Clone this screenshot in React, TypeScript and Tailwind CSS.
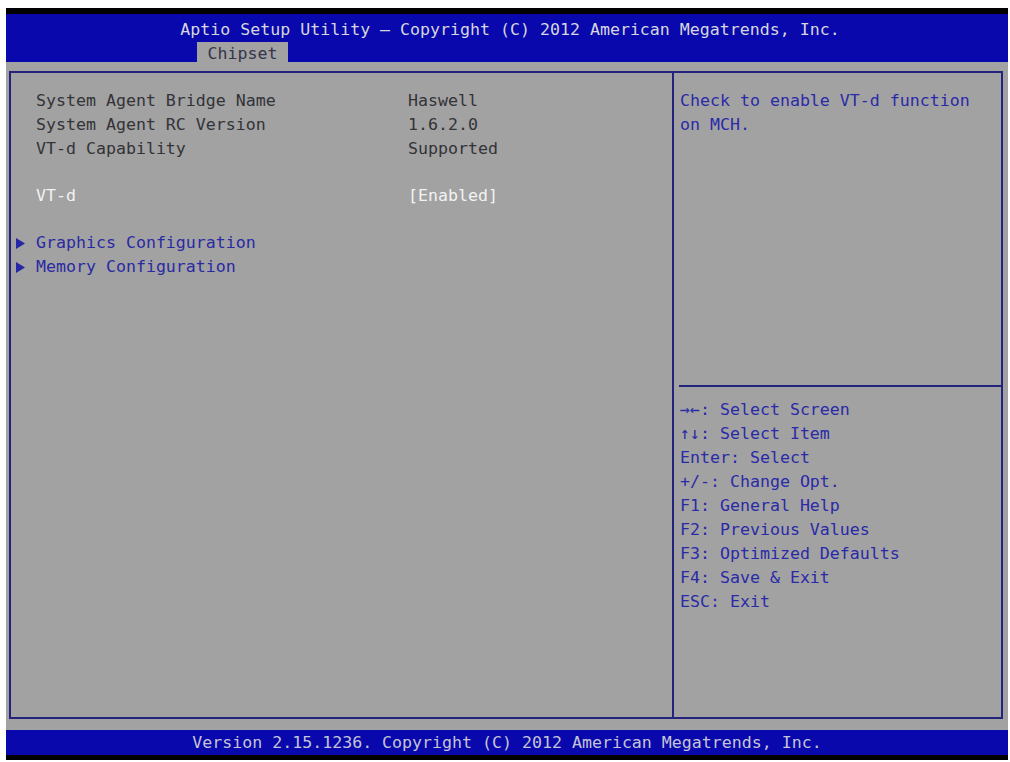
const mono = "font-['DejaVu_Sans_Mono',monospace] text-[16.6px] leading-[24px] whitespace-pre";

const info = [
  ["System Agent Bridge Name", "Haswell"],
  ["System Agent RC Version", "1.6.2.0"],
  ["VT-d Capability", "Supported"],
];

const help = [
  "→←: Select Screen",
  "↑↓: Select Item",
  "Enter: Select",
  "+/-: Change Opt.",
  "F1: General Help",
  "F2: Previous Values",
  "F3: Optimized Defaults",
  "F4: Save & Exit",
  "ESC: Exit",
];

function Arrow() {
  return (
    <svg width="9" height="11" viewBox="0 0 9 11" className="shrink-0">
      <polygon points="0,0 9,5.5 0,11" fill="#2626a6" />
    </svg>
  );
}

function SubMenu({ label }: { label: string }) {
  return (
    <div className="flex items-center h-[24px]">
      <div className="w-[25px] pl-[5px] flex items-center">
        <Arrow />
      </div>
      <span className={`${mono} text-[#2a2aa4]`}>{label}</span>
    </div>
  );
}

export default function App() {
  return (
    <div className="w-[1010px] h-[762px] bg-white pt-[8px] pl-[6px] pr-[2px] pb-[2px]">
      <div className="flex flex-col h-full">
        <div className="h-[6px] bg-black" />
        <div className="h-[48px] bg-[#0808ac] pt-[4px] flex flex-col">
          <div className={`${mono} leading-[21px] text-center text-[#d6d6de] pl-[6px]`}>
            Aptio Setup Utility – Copyright (C) 2012 American Megatrends, Inc.
          </div>
          <div className="flex pl-[191px]">
            <div className={`${mono} h-[23px] leading-[23px] w-[91px] text-center bg-[#a2a2a2] text-[#34344a]`}>
              Chipset
            </div>
          </div>
        </div>

        <div className="flex-1 bg-[#a2a2a2] pt-[9px] pl-[3px] pr-[5px] pb-[11px]">
          <div className="h-full border-2 border-[#23237e] flex">
            <div className="w-[663px] border-r-2 border-[#23237e] pt-[16px]">
              {info.map(([k, v]) => (
                <div key={k} className={`${mono} flex text-[#333338]`}>
                  <span className="pl-[25px] w-[397px]">{k}</span>
                  <span>{v}</span>
                </div>
              ))}
              <div className={`${mono} flex text-[#f2f2f2] mt-[23px]`}>
                <span className="pl-[25px] w-[397px]">VT-d</span>
                <span>[Enabled]</span>
              </div>
              <div className="mt-[23px]">
                <SubMenu label="Graphics Configuration" />
                <SubMenu label="Memory Configuration" />
              </div>
            </div>

            <div className="flex-1 flex flex-col">
              <div className={`h-[312px] pt-[16px] pl-[6px] ${mono} text-[#2a2aa8]`}>
                <div>Check to enable VT-d function</div>
                <div>on MCH.</div>
              </div>
              <div className="h-[2px] bg-[#23237e] ml-[5px]" />
              <div className={`pt-[11px] pl-[6px] ${mono} text-[#2a2aa8]`}>
                {help.map((h) => (
                  <div key={h}>{h}</div>
                ))}
              </div>
            </div>
          </div>
        </div>

        <div className={`h-[25px] bg-[#0808ac] ${mono} leading-[25px] text-center text-[#c4c4d6]`}>
          Version 2.15.1236. Copyright (C) 2012 American Megatrends, Inc.
        </div>
        <div className="h-[5px] bg-black" />
      </div>
    </div>
  );
}
